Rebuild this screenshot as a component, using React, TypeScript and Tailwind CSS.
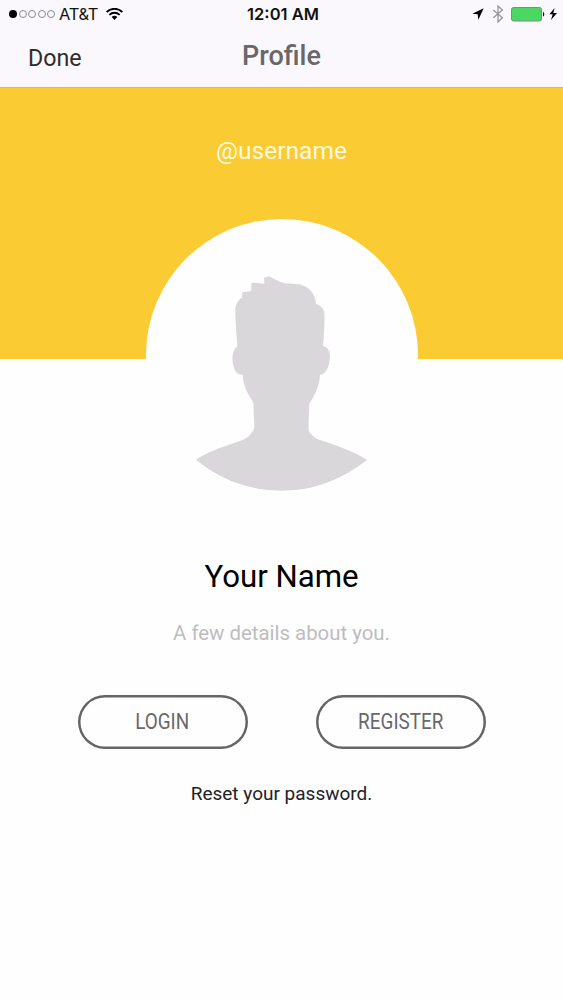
import React from 'react';

const StatusBar: React.FC = () => {
  return (
    <div className="grid grid-cols-3 items-center h-7 pl-[9px] pr-1.5 font-[Inter,sans-serif] text-[#111]">
      <div className="flex items-center whitespace-nowrap">
        <div className="flex gap-[1.5px]">
          <span className="w-2 h-2 rounded-full bg-black" />
          {[1, 2, 3, 4].map((dot) => (
            <span key={dot} className="w-2 h-2 rounded-full border border-[#8c8a8e]" />
          ))}
        </div>
        <span className="ml-1 text-[16.500px] tracking-[-0.35px]">AT&amp;T</span>
        <svg className="ml-2 w-[17px] h-3" viewBox="0 0 51 36" fill="none" stroke="#000" strokeWidth="5.5">
          <path d="M2 12C15 -1 36 -1 49 12" />
          <path d="M10 20.5C19 12 32 12 41 20.5" />
          <path d="M17 27C21.500 22 29.500 22 34 27L25.500 36Z" fill="#000" stroke="none" />
        </svg>
      </div>
      <div className="text-center text-[16.500px] font-semibold whitespace-nowrap">12:01 AM</div>
      <div className="flex items-center justify-end">
        <svg className="w-3 h-3" viewBox="0 0 36 36" fill="#000">
          <path d="M35 1L19 35L17 19L1 17Z" />
        </svg>
        <svg className="ml-2 w-3 h-[18px]" viewBox="0 0 36 54" fill="none" stroke="#99979b" strokeWidth="4">
          <path d="M4 15L31 38L18 51V3L31 15L4 38" />
        </svg>
        <svg className="ml-[7px] w-[34px] h-[15px]" viewBox="0 0 34 15">
          <rect x="0.5" y="0.5" width="30" height="13.500" rx="2" fill="#4bd763" stroke="#77917b" />
          <path d="M32 5C33.700 5.500 33.700 9 32 9.500Z" fill="#111" />
        </svg>
        <svg className="ml-1 w-2 h-3" viewBox="0 0 24 36" fill="#000">
          <path d="M17 0L1 19H11L6 36L24 15H13Z" />
        </svg>
      </div>
    </div>
  );
};

const Header: React.FC = () => {
  return (
    <header className="h-[88px] bg-[#faf8fc] border-b border-[#c5b992]">
      <StatusBar />
      <div className="grid grid-cols-3 h-[58px] items-center">
        <button className="pl-7 pt-0.5 text-left text-[23.200px] text-[#2d2c2f]">Done</button>
        <h1 className="text-center text-[27px] font-medium leading-8 pb-0.5 text-[#69676b]">Profile</h1>
      </div>
    </header>
  );
};

const Avatar: React.FC = () => {
  return (
    <svg className="mt-[52px] w-[272px] h-[272px] shrink-0 rounded-full bg-[#fefefe]" viewBox="18 27 816 816">
      <path
        fill="#d9d7da"
        d="M168 749C215 718 263 707 308 690C328 681 343 664 343 648L340 578C325 553 309 528 308 494C294 496 286 487 281 471C274 447 277 420 292 409C290 371 285 332 286 293C290 277 298 266 306 263L307 247L334 243V220L340 218L373 221L372 204L387 199L421 216C434 222 448 219 463 222C483 222 497 228 508 238C521 250 527 266 528 282C541 286 551 295 553 309C554 343 552 376 549 408C562 411 570 421 570 439C569 463 561 495 540 494C539 526 524 557 508 580L505 656C509 673 524 684 543 691C589 707 640 723 681 750C610 804 530 842 426 842C325 842 239 808 168 749Z"
      />
    </svg>
  );
};

interface PillButtonProps {
  label: string;
}

const PillButton: React.FC<PillButtonProps> = ({ label }) => {
  return (
    <button className="flex items-center justify-center w-[170px] h-[54px] rounded-full shadow-[inset_0_0_0_2.5px_#666467] text-[22.500px] text-[#69676b]">
      <span className="scale-x-[0.84]">{label}</span>
    </button>
  );
};

export default function App() {
  return (
    <div className="w-[563px] h-[1000px] overflow-hidden bg-[#fefefe] font-[Roboto,sans-serif]">
      <Header />
      <main className="flex flex-col items-center h-[912px] bg-[linear-gradient(#fbcb34_271px,#fefefe_271px)]">
        <p className="mt-[47px] h-8 leading-8 text-[24.500px] text-[#fff9df]">@username</p>
        <Avatar />
        <h2 className="mt-[66px] h-10 leading-10 text-[31.200px] text-black">Your Name</h2>
        <p className="mt-[22px] h-7 leading-7 text-[20.400px] text-[#bebcc0]">A few details about you.</p>
        <div className="mt-12 flex gap-[68px]">
          <PillButton label="LOGIN" />
          <PillButton label="REGISTER" />
        </div>
        <a className="mt-[33px] h-6 leading-6 text-[19px] text-[#222123]">Reset your password.</a>
      </main>
    </div>
  );
}
